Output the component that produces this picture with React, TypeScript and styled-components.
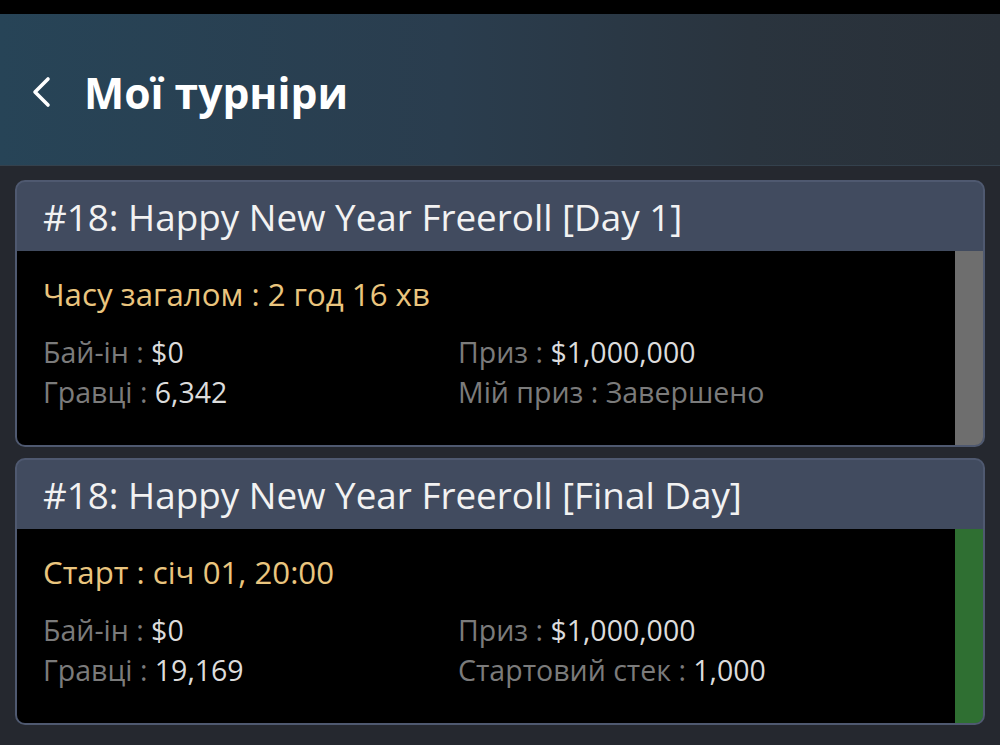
import React from "react";
import styled, { createGlobalStyle } from "styled-components";

const Global = createGlobalStyle`
  html, body { margin: 0; padding: 0; background: #25282f; }
  * { box-sizing: border-box; }
`;

const Page = styled.div`
  width: 1000px;
  height: 745px;
  display: flex;
  flex-direction: column;
  background: #25282f;
  font-family: "Open Sans", "Noto Sans", sans-serif;
  overflow: hidden;
`;

const StatusBar = styled.div`
  height: 14px;
  background: #000;
  flex-shrink: 0;
`;

const Header = styled.header`
  height: 152px;
  flex-shrink: 0;
  display: flex;
  align-items: center;
  gap: 32px;
  padding-left: 30px;
  background: linear-gradient(90deg, #274457 0%, #2a3d4e 45%, #2a343e 75%, #293038 100%);
  border-bottom: 1px solid #34414d;
`;

const BackButton = styled.button`
  border: 0;
  background: transparent;
  padding: 0;
  margin-top: 5px;
  width: 22px;
  height: 32px;
  display: flex;
  align-items: center;
  justify-content: center;
  cursor: pointer;
`;

const Title = styled.h1`
  margin: 0;
  font-size: 42.6px;
  font-weight: 700;
  color: #ffffff;
  line-height: 1;
  padding-top: 6px;
`;

const List = styled.div`
  flex: 1;
  display: flex;
  flex-direction: column;
  gap: 11px;
  padding: 14px 15px 0 15px;
`;

const Card = styled.div`
  height: 267px;
  display: flex;
  flex-direction: column;
  border: 2px solid #4f5970;
  border-radius: 10px;
  overflow: hidden;
  background: #414b5f;
`;

const CardTitle = styled.div`
  height: 69px;
  flex-shrink: 0;
  display: flex;
  align-items: center;
  padding-left: 26px;
  font-size: 36.8px;
  color: #f2f2f2;
  white-space: nowrap;
`;

const CardBody = styled.div`
  flex: 1;
  display: flex;
`;

const Content = styled.div`
  flex: 1;
  background: #000;
  padding: 24px 0 0 26px;
`;

const Strip = styled.div<{ $color: string }>`
  width: 28px;
  background: ${(p) => p.$color};
`;

const Highlight = styled.div`
  height: 38px;
  line-height: 38px;
  font-size: 31.2px;
  color: #eac57e;
  margin-bottom: 19px;
  white-space: nowrap;
`;

const Grid = styled.div`
  display: grid;
  grid-template-columns: 415px 1fr;
  grid-auto-rows: 40px;
`;

const Row = styled.div`
  line-height: 40px;
  font-size: 28.5px;
  white-space: nowrap;
`;

const Label = styled.span`
  color: #7b7b7b;
`;

const Value = styled.span`
  color: #dcdcdc;
`;

type Item = { label: string; value: string };
type Tournament = {
  title: string;
  highlight: string;
  items: Item[];
  strip: string;
};

const data: Tournament[] = [
  {
    title: "#18: Happy New Year Freeroll [Day 1]",
    highlight: "Часу загалом : 2 год 16 хв",
    items: [
      { label: "Бай-ін : ", value: "$0" },
      { label: "Приз : ", value: "$1,000,000" },
      { label: "Гравці : ", value: "6,342" },
      { label: "Мій приз : Завершено", value: "" },
    ],
    strip: "#6e6e6e",
  },
  {
    title: "#18: Happy New Year Freeroll [Final Day]",
    highlight: "Старт : січ 01, 20:00",
    items: [
      { label: "Бай-ін : ", value: "$0" },
      { label: "Приз : ", value: "$1,000,000" },
      { label: "Гравці : ", value: "19,169" },
      { label: "Стартовий стек : ", value: "1,000" },
    ],
    strip: "#2f6f32",
  },
];

export default function App() {
  return (
    <Page>
      <Global />
      <StatusBar />
      <Header>
        <BackButton aria-label="back">
          <svg width="20" height="32" viewBox="0 0 20 32">
            <polyline
              points="17,3 4,16 17,29"
              fill="none"
              stroke="#ffffff"
              strokeWidth="3.6"
              strokeLinecap="round"
              strokeLinejoin="round"
            />
          </svg>
        </BackButton>
        <Title>Мої турніри</Title>
      </Header>
      <List>
        {data.map((t, i) => (
          <Card key={i}>
            <CardTitle>{t.title}</CardTitle>
            <CardBody>
              <Content>
                <Highlight>{t.highlight}</Highlight>
                <Grid>
                  {t.items.map((it, j) => (
                    <Row key={j}>
                      <Label>{it.label}</Label>
                      <Value>{it.value}</Value>
                    </Row>
                  ))}
                </Grid>
              </Content>
              <Strip $color={t.strip} />
            </CardBody>
          </Card>
        ))}
      </List>
    </Page>
  );
}
